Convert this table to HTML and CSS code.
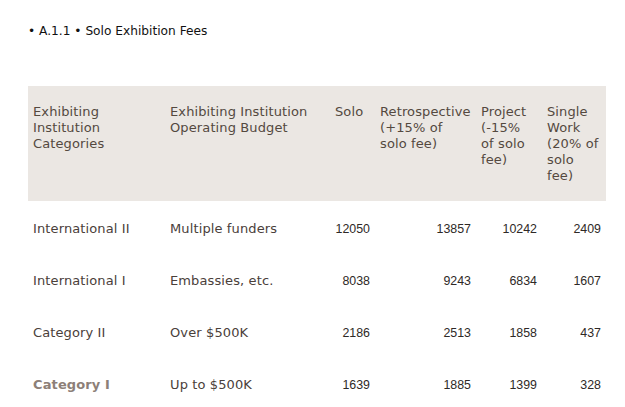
FILE: index.html
```html
<!DOCTYPE html>
<html>
<head>
<meta charset="utf-8">
<link rel="stylesheet" href="styles.css">
</head>
<body>
<div class="page">
  <p class="title">• A.1.1 • Solo Exhibition Fees</p>
  <table class="fees">
    <colgroup>
      <col class="c1"><col class="c2"><col class="c3"><col class="c4"><col class="c5"><col class="c6">
    </colgroup>
    <thead>
      <tr>
        <th>Exhibiting Institution Categories</th>
        <th>Exhibiting Institution Operating Budget</th>
        <th>Solo</th>
        <th>Retrospective (+15% of solo fee)</th>
        <th class="narrow">Project (-15% of solo fee)</th>
        <th>Single Work (20% of solo fee)</th>
      </tr>
    </thead>
    <tbody>
      <tr><td>International II</td><td>Multiple funders</td><td class="num">12050</td><td class="num">13857</td><td class="num">10242</td><td class="num">2409</td></tr>
      <tr><td>International I</td><td>Embassies, etc.</td><td class="num">8038</td><td class="num">9243</td><td class="num">6834</td><td class="num">1607</td></tr>
      <tr><td>Category II</td><td>Over $500K</td><td class="num">2186</td><td class="num">2513</td><td class="num">1858</td><td class="num">437</td></tr>
      <tr><td class="hl">Category I</td><td>Up to $500K</td><td class="num">1639</td><td class="num">1885</td><td class="num">1399</td><td class="num">328</td></tr>
    </tbody>
  </table>
</div>
</body>
</html>
```
FILE: styles.css
```css
html, body {
  margin: 0;
  padding: 0;
  background: #ffffff;
}
.page {
  padding: 24px 0 0 28px;
}
.title {
  margin: 0 0 48px 0;
  font-family: "DejaVu Sans", Verdana, sans-serif;
  font-size: 12.2px;
  line-height: 14px;
  color: #111111;
}
.fees {
  border-collapse: collapse;
  table-layout: fixed;
  width: 578px;
  font-family: "DejaVu Sans", Verdana, sans-serif;
  font-size: 13px;
  line-height: 16px;
  letter-spacing: 0.12px;
  color: #4a403a;
}
.c1 { width: 137px; }
.c2 { width: 165px; }
.c3 { width: 45px; }
.c4 { width: 101px; }
.c5 { width: 66px; }
.c6 { width: 64px; }
.fees thead tr {
  background: #ebe7e3;
}
.fees th {
  font-weight: normal;
  text-align: left;
  vertical-align: top;
  padding: 18px 5px 17px 5px;
  color: #54493f;
}
.fees th.narrow {
  padding-right: 8px;
}
.fees td {
  height: 52px;
  padding: 3px 5px 0 5px;
  vertical-align: middle;
  box-sizing: border-box;
}
.fees td.num {
  text-align: right;
  font-family: "Liberation Sans", Arial, sans-serif;
  font-size: 12.4px;
  letter-spacing: 0;
  color: #2e2926;
}
.fees td.hl {
  font-weight: bold;
  color: #8d7f78;
}
```
